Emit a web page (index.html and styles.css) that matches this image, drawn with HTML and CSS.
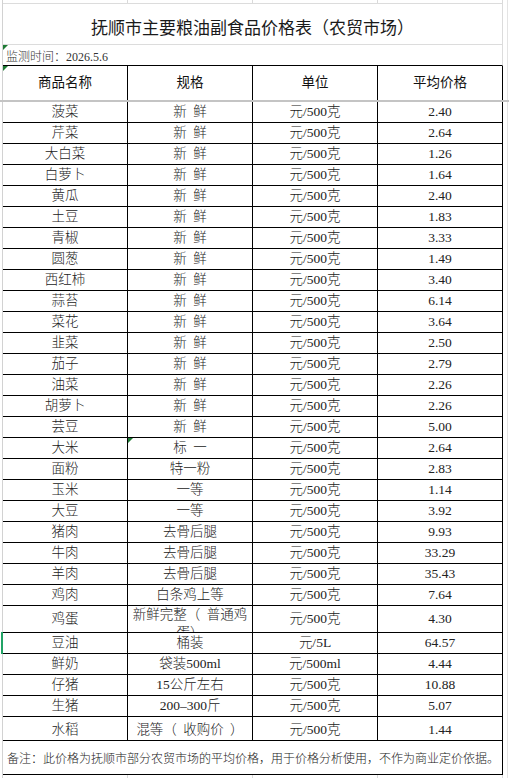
FILE: index.html
```html
<!DOCTYPE html>
<html lang="zh">
<head>
<meta charset="utf-8">
<title>抚顺市主要粮油副食品价格表</title>
<link rel="stylesheet" href="styles.css">
</head>
<body>
<div class="sheet">
  <div class="strip"><span></span><span></span><span></span><span></span></div>
  <div class="title">抚顺市主要粮油副食品价格表（农贸市场）</div>
  <div class="date tri">监测时间：2026.5.6</div>
  <div class="row head">
    <div class="cell tri">商品名称</div>
    <div class="cell">规格</div>
    <div class="cell">单位</div>
    <div class="cell">平均价格</div>
  </div>
  <div class="freeze"></div>
  <div class="row"><div class="cell">菠菜</div><div class="cell sp">新 鲜</div><div class="cell">元/500克</div><div class="cell">2.40</div></div>
  <div class="row"><div class="cell">芹菜</div><div class="cell sp">新 鲜</div><div class="cell">元/500克</div><div class="cell">2.64</div></div>
  <div class="row"><div class="cell">大白菜</div><div class="cell sp">新 鲜</div><div class="cell">元/500克</div><div class="cell">1.26</div></div>
  <div class="row"><div class="cell">白萝卜</div><div class="cell sp">新 鲜</div><div class="cell">元/500克</div><div class="cell">1.64</div></div>
  <div class="row"><div class="cell">黄瓜</div><div class="cell sp">新 鲜</div><div class="cell">元/500克</div><div class="cell">2.40</div></div>
  <div class="row"><div class="cell">土豆</div><div class="cell sp">新 鲜</div><div class="cell">元/500克</div><div class="cell">1.83</div></div>
  <div class="row"><div class="cell">青椒</div><div class="cell sp">新 鲜</div><div class="cell">元/500克</div><div class="cell">3.33</div></div>
  <div class="row"><div class="cell">圆葱</div><div class="cell sp">新 鲜</div><div class="cell">元/500克</div><div class="cell">1.49</div></div>
  <div class="row"><div class="cell">西红柿</div><div class="cell sp">新 鲜</div><div class="cell">元/500克</div><div class="cell">3.40</div></div>
  <div class="row"><div class="cell">蒜苔</div><div class="cell sp">新 鲜</div><div class="cell">元/500克</div><div class="cell">6.14</div></div>
  <div class="row"><div class="cell">菜花</div><div class="cell sp">新 鲜</div><div class="cell">元/500克</div><div class="cell">3.64</div></div>
  <div class="row"><div class="cell">韭菜</div><div class="cell sp">新 鲜</div><div class="cell">元/500克</div><div class="cell">2.50</div></div>
  <div class="row"><div class="cell">茄子</div><div class="cell sp">新 鲜</div><div class="cell">元/500克</div><div class="cell">2.79</div></div>
  <div class="row"><div class="cell">油菜</div><div class="cell sp">新 鲜</div><div class="cell">元/500克</div><div class="cell">2.26</div></div>
  <div class="row"><div class="cell">胡萝卜</div><div class="cell sp">新 鲜</div><div class="cell">元/500克</div><div class="cell">2.26</div></div>
  <div class="row"><div class="cell">芸豆</div><div class="cell sp">新 鲜</div><div class="cell">元/500克</div><div class="cell">5.00</div></div>
  <div class="row"><div class="cell">大米</div><div class="cell sp tri">标 一</div><div class="cell">元/500克</div><div class="cell">2.64</div></div>
  <div class="row"><div class="cell">面粉</div><div class="cell">特一粉</div><div class="cell">元/500克</div><div class="cell">2.83</div></div>
  <div class="row"><div class="cell">玉米</div><div class="cell">一等</div><div class="cell">元/500克</div><div class="cell">1.14</div></div>
  <div class="row"><div class="cell">大豆</div><div class="cell">一等</div><div class="cell">元/500克</div><div class="cell">3.92</div></div>
  <div class="row"><div class="cell">猪肉</div><div class="cell">去骨后腿</div><div class="cell">元/500克</div><div class="cell">9.93</div></div>
  <div class="row"><div class="cell">牛肉</div><div class="cell">去骨后腿</div><div class="cell">元/500克</div><div class="cell">33.29</div></div>
  <div class="row"><div class="cell">羊肉</div><div class="cell">去骨后腿</div><div class="cell">元/500克</div><div class="cell">35.43</div></div>
  <div class="row"><div class="cell">鸡肉</div><div class="cell">白条鸡上等</div><div class="cell">元/500克</div><div class="cell">7.64</div></div>
  <div class="row tall"><div class="cell">鸡蛋</div><div class="cell sp wrap">新鲜完整（ 普通鸡蛋）</div><div class="cell">元/500克</div><div class="cell">4.30</div></div>
  <div class="row sel"><div class="cell">豆油</div><div class="cell">桶装</div><div class="cell">元/5L</div><div class="cell">64.57</div></div>
  <div class="row"><div class="cell">鲜奶</div><div class="cell">袋装500ml</div><div class="cell">元/500ml</div><div class="cell">4.44</div></div>
  <div class="row"><div class="cell">仔猪</div><div class="cell">15公斤左右</div><div class="cell">元/500克</div><div class="cell">10.88</div></div>
  <div class="row"><div class="cell">生猪</div><div class="cell">200–300斤</div><div class="cell">元/500克</div><div class="cell">5.07</div></div>
  <div class="row last"><div class="cell">水稻</div><div class="cell sp">混等（ 收购价 ）</div><div class="cell">元/500克</div><div class="cell">1.44</div></div>
  <div class="note">备注：此价格为抚顺市部分农贸市场的平均价格，用于价格分析使用，不作为商业定价依据。</div>
  <div class="strip"><span></span><span></span><span></span><span></span></div>
</div>
</body>
</html>
```

FILE: styles.css
```css
* {
  box-sizing: border-box;
}

html,
body {
  margin: 0;
  padding: 0;
  background: #fff;
}

body {
  font-family: "Liberation Serif", "Noto Sans CJK SC", serif;
  font-weight: 300;
  color: #222;
}

.sheet {
  width: 509px;
  height: 778px;
  overflow: hidden;
  padding-left: 3px;
  background:
    linear-gradient(#d2d2d2, #d2d2d2) 2px 0 / 1px 100% no-repeat,
    linear-gradient(#e4e4e4, #e4e4e4) 507px 0 / 1px 100% no-repeat;
}

.strip {
  display: grid;
  grid-template-columns: repeat(4, 125px);
  height: 3px;
}

.strip span {
  border-right: 1px solid #dadada;
}

.title {
  width: 500px;
  height: 42px;
  border-top: 1px solid #dcdcdc;
  border-bottom: 1px solid #dcdcdc;
  border-right: 1px solid #dcdcdc;
  display: flex;
  align-items: center;
  justify-content: center;
  padding-top: 4px;
  font-family: "Noto Sans CJK SC", sans-serif;
  font-weight: 400;
  font-size: 17px;
  color: #1a1a1a;
}

.date {
  position: relative;
  width: 500px;
  height: 21px;
  border-right: 1px solid #dcdcdc;
  border-bottom: 1px solid #000;
  display: flex;
  align-items: center;
  padding: 2px 0 0 3px;
  font-size: 12px;
  color: #333;
}

.row {
  display: grid;
  grid-template-columns: repeat(4, 125px);
  height: 21px;
}

.cell {
  position: relative;
  border-right: 1px solid #000;
  border-bottom: 1px solid #000;
  display: flex;
  align-items: center;
  justify-content: center;
  text-align: center;
  overflow: hidden;
  white-space: nowrap;
  font-size: 13.5px;
  line-height: 18px;
}

.sp {
  word-spacing: 3px;
}

.row.head {
  height: 34px;
}

.row.head .cell {
  border-bottom: none;
  font-weight: 400;
  color: #111;
}

.freeze {
  width: 509px;
  height: 2px;
  margin-left: -3px;
  background: #c4c4c4;
}

.row.tall {
  height: 27px;
}

.cell.wrap {
  white-space: normal;
  align-items: flex-start;
  padding: 0 4px;
}

.row.last {
  height: 24px;
}

.row.last .cell {
  padding-top: 3px;
}

.row.sel {
  position: relative;
}

.row.sel::before {
  content: "";
  position: absolute;
  left: -2px;
  top: -1px;
  width: 2px;
  height: 22px;
  background: #21a366;
}

.tri::before {
  content: "";
  position: absolute;
  left: 0;
  top: 0;
  border-top: 5px solid #1e7b34;
  border-right: 5px solid transparent;
}

.note {
  width: 500px;
  height: 34px;
  border-right: 1px solid #000;
  border-bottom: 1px solid #000;
  display: flex;
  align-items: center;
  padding-left: 4px;
  font-size: 12px;
  white-space: nowrap;
}
```
